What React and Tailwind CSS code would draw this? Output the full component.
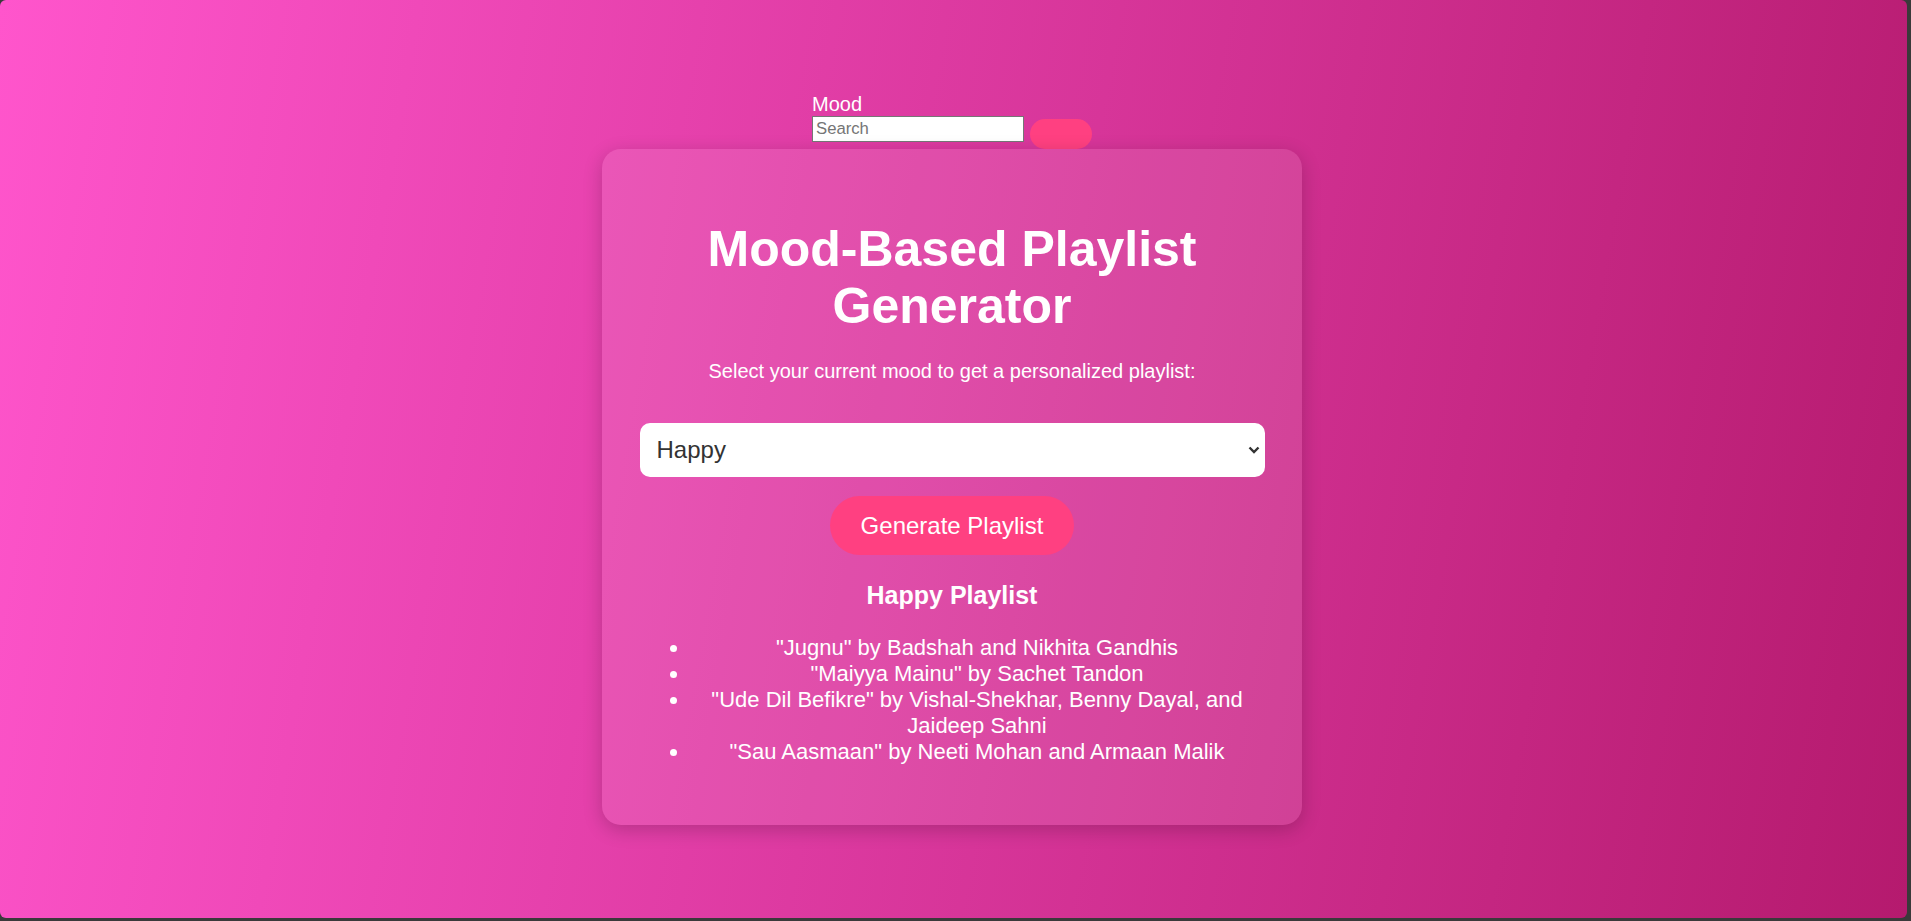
import { useState } from "react";

const playlists = {
  Happy: [
    '"Jugnu" by Badshah and Nikhita Gandhis',
    '"Maiyya Mainu" by Sachet Tandon',
    '"Ude Dil Befikre" by Vishal-Shekhar, Benny Dayal, and Jaideep Sahni',
    '"Sau Aasmaan" by Neeti Mohan and Armaan Malik',
  ],
  Sad: ['"Channa Mereya" by Arijit Singh'],
  Energetic: ['"Malhari" by Vishal Dadlani'],
  Relaxed: ['"Ilahi" by Arijit Singh'],
};

const App = () => {
  const [mood, setMood] = useState("Happy");
  const [shown, setShown] = useState("Happy");

  return (
    <div className="h-screen bg-[#3a3a3a] pr-[4px] pb-[3px] font-['Liberation_Sans',Arial,sans-serif]">
      <div className="h-full rounded-[6px] bg-[linear-gradient(100deg,#ff55cc,#b51a6e)] flex flex-col items-center pt-[92px] pr-[3px] text-white">
        {/* Search form */}
        <div className="flex flex-col">
          <label className="text-[20px] leading-[24px]">Mood</label>
          <div className="flex items-start gap-[6px]">
            <input
              type="text"
              placeholder="Search"
              className="w-[212px] h-[26px] bg-white border border-[#767676] px-[3px] text-[16.7px] text-black placeholder:text-[#757575] outline-none"
            />
            <button className="mt-[3px] w-[62px] h-[30px] rounded-full bg-[#ff4081]"></button>
          </div>
        </div>

        {/* Card */}
        <div className="w-[700px] p-[37.5px] rounded-[19px] bg-white/10 shadow-[0_5px_19px_rgba(0,0,0,0.2)] flex flex-col">
          <h1 className="mt-[34px] mb-[24px] text-[50px] leading-[57.5px] font-bold text-center">
            Mood-Based Playlist Generator
          </h1>
          <p className="text-[20px] leading-[23px] text-center">
            Select your current mood to get a personalized playlist:
          </p>

          <div className="relative mt-[40px]">
            <select
              value={mood}
              onChange={(e) => setMood(e.target.value)}
              className="w-full h-[54px] appearance-none rounded-[10px] bg-white pl-[17px] text-[24px] text-[#333] outline-none"
            >
              <option>Happy</option>
              <option>Sad</option>
              <option>Energetic</option>
              <option>Relaxed</option>
            </select>
            <svg
              className="pointer-events-none absolute right-[5px] top-[23px]"
              width="12"
              height="8"
              viewBox="0 0 12 8"
            >
              <polyline
                points="1.5,1.5 6,6 10.5,1.5"
                fill="none"
                stroke="#333"
                strokeWidth="2.4"
              />
            </svg>
          </div>

          <button
            onClick={() => setShown(mood)}
            className="self-center mt-[19.5px] h-[59px] px-[31px] rounded-full bg-[#ff4081] text-[24px] text-white"
          >
            Generate Playlist
          </button>

          <h3 className="mt-[26px] text-[25px] leading-[29px] font-bold text-center">
            {shown} Playlist
          </h3>
          <ul className="mt-[24.5px] mb-[23px] pl-[50px] list-disc text-[22px] leading-[26px] text-center">
            {playlists[shown].map((song) => (
              <li key={song}>{song}</li>
            ))}
          </ul>
        </div>
      </div>
    </div>
  );
};

export default App;
